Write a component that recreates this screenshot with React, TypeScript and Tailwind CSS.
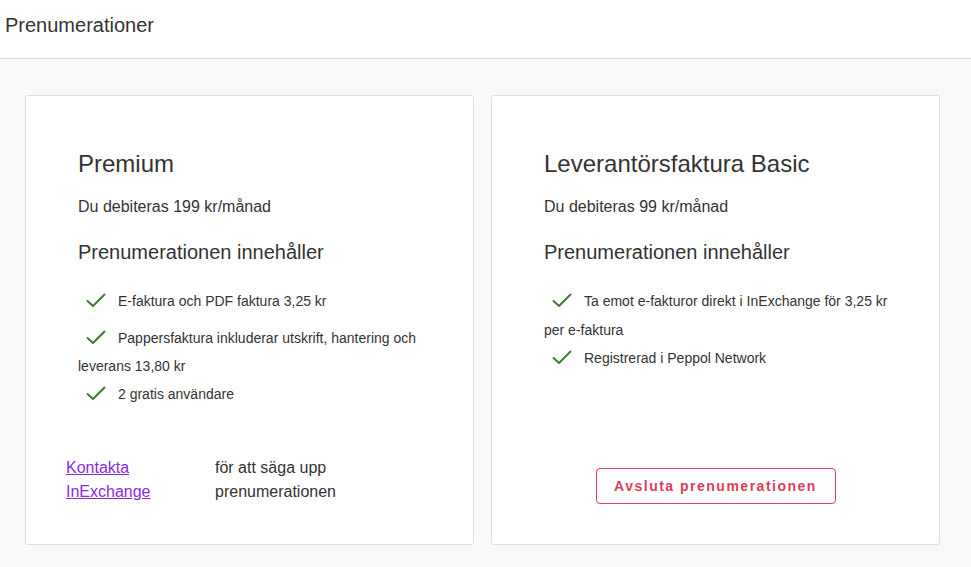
import React from "react";

const Check = () => (
  <svg
    width="20"
    height="15"
    viewBox="0 0 20 15"
    fill="none"
    stroke="#3f7a32"
    strokeWidth="2"
    strokeLinecap="round"
    strokeLinejoin="round"
    className="inline-block align-[-2px] ml-[8px] mr-[12px]"
  >
    <polyline points="1.5,8 7,13 18.5,1.5" />
  </svg>
);

const Feature = ({ children, className = "" }: { children: React.ReactNode; className?: string }) => (
  <li className={"text-[14px] " + className}>
    <Check />
    {children}
  </li>
);

export default function App() {
  return (
    <div className="min-h-[567px] bg-[#f9f9f9] text-[#333] font-['Liberation_Sans',Arial,sans-serif]">
      <header className="h-[59px] bg-white border-b border-[#dddddd] flex items-center px-[5px] pb-[9px]">
        <h1 className="text-[20px]">Prenumerationer</h1>
      </header>

      <div className="flex gap-[17px] pl-[25px] pt-[36px]">
        {/* Premium */}
        <section className="w-[449px] h-[450px] bg-white border border-[#dddddd] rounded-[3px] flex flex-col">
          <div className="pl-[52px] pr-[46px] pt-[54px]">
            <h2 className="text-[24px] leading-[28px]">Premium</h2>
            <p className="text-[16px] leading-[20px] mt-[19px]">Du debiteras 199 kr/månad</p>
            <h3 className="text-[20px] leading-[24px] mt-[23px]">Prenumerationen innehåller</h3>
            <ul className="mt-[23px] leading-[28px]">
              <Feature>E-faktura och PDF faktura 3,25 kr</Feature>
              <Feature className="mt-[9px]">Pappersfaktura inkluderar utskrift, hantering och leverans 13,80 kr</Feature>
              <Feature>2 gratis användare</Feature>
            </ul>
          </div>
          <div className="mt-auto pb-[40px] pl-[40px] grid grid-cols-[149px_150px] text-[16px] leading-[24px]">
            <a href="#" className="text-[#8a2be2] underline">
              Kontakta InExchange
            </a>
            <span>för att säga upp prenumerationen</span>
          </div>
        </section>

        {/* Leverantörsfaktura Basic */}
        <section className="w-[449px] h-[450px] bg-white border border-[#dddddd] rounded-[3px] flex flex-col">
          <div className="pl-[52px] pr-[46px] pt-[54px]">
            <h2 className="text-[24px] leading-[28px]">Leverantörsfaktura Basic</h2>
            <p className="text-[16px] leading-[20px] mt-[19px]">Du debiteras 99 kr/månad</p>
            <h3 className="text-[20px] leading-[24px] mt-[23px]">Prenumerationen innehåller</h3>
            <ul className="mt-[23px] leading-[28.5px]">
              <Feature>Ta emot e-fakturor direkt i InExchange för 3,25 kr per e-faktura</Feature>
              <Feature>Registrerad i Peppol Network</Feature>
            </ul>
          </div>
          <div className="mt-auto pb-[40px] flex justify-center">
            <button className="w-[240px] h-[36px] border border-[#d9405a] rounded-[4px] text-[#d9405a] text-[14px] font-bold tracking-[1.5px]">
              Avsluta prenumerationen
            </button>
          </div>
        </section>
      </div>
    </div>
  );
}
